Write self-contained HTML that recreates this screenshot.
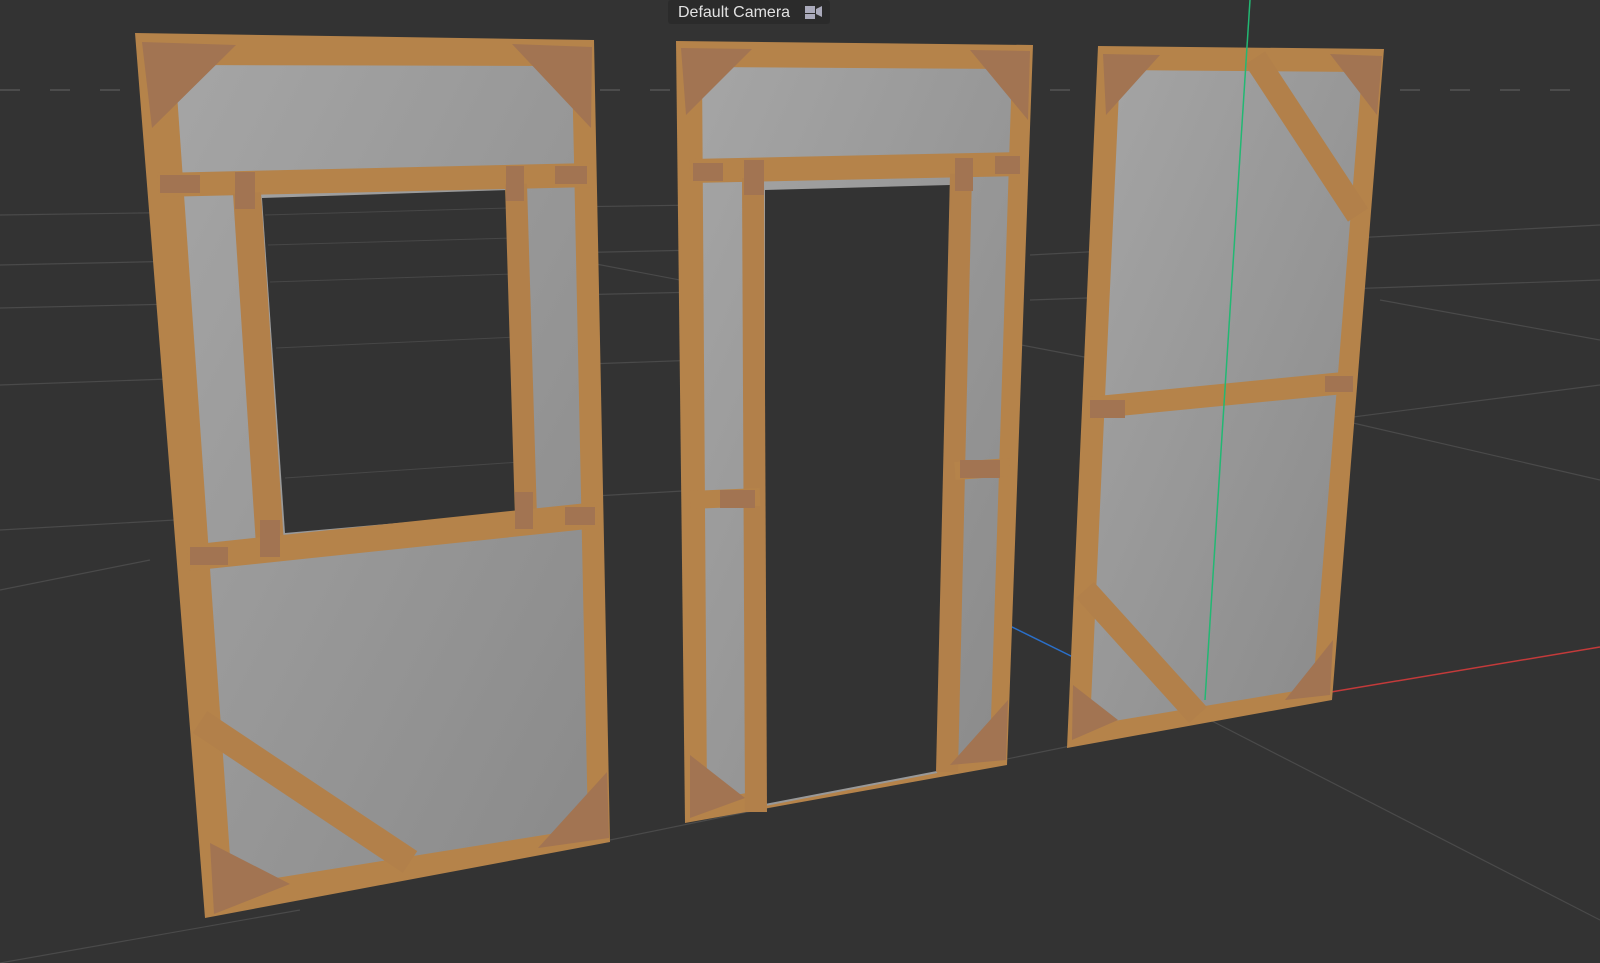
<!DOCTYPE html>
<html><head><style>
html,body{margin:0;padding:0;width:1600px;height:963px;overflow:hidden;background:#333;}
svg{display:block}
</style></head><body>
<svg width="1600" height="963" viewBox="0 0 1600 963" xmlns="http://www.w3.org/2000/svg">
<defs>
<linearGradient id="g" x1="0" y1="0" x2="1" y2="1"><stop offset="0" stop-color="#a5a5a5"/><stop offset="1" stop-color="#8a8a8a"/></linearGradient>
</defs>
<rect width="1600" height="963" fill="#333"/>
<g stroke="#4a4a4a" stroke-width="1.2" fill="none">
<line x1="0" y1="215" x2="700" y2="205"/>
<line x1="0" y1="265" x2="700" y2="250"/>
<line x1="0" y1="308" x2="700" y2="292"/>
<line x1="0" y1="385" x2="700" y2="360"/>
<line x1="0" y1="530" x2="700" y2="490"/>
<line x1="1030" y1="255" x2="1600" y2="225"/>
<line x1="1030" y1="300" x2="1600" y2="280"/>
<line x1="1330" y1="420" x2="1600" y2="385"/>
<line x1="0" y1="590" x2="150" y2="560"/>
<line x1="260" y1="200" x2="1100" y2="360"/>
<line x1="1380" y1="300" x2="1600" y2="340"/>
<line x1="1340" y1="420" x2="1600" y2="480"/>
<line x1="1210" y1="720" x2="1600" y2="920"/>
<line x1="0" y1="963" x2="300" y2="910"/>
<line x1="610" y1="840" x2="1100" y2="740"/>
</g>
<line x1="0" y1="90" x2="1600" y2="90" stroke="#555" stroke-width="1.5" stroke-dasharray="20 30"/>
<line x1="805" y1="525" x2="1075" y2="658" stroke="#2a6fc9" stroke-width="1.5"/>
<line x1="1325" y1="693" x2="1600" y2="647" stroke="#c43a3a" stroke-width="1.5"/>

<!-- FRAME 1 -->
<polygon points="135,33 594,40 610,842 205,918" fill="#b5834a"/>
<polygon points="175,65 572,66 588,828 232,885" fill="url(#g)"/>
<line x1="158" y1="185" x2="592" y2="175" stroke="#b5834a" stroke-width="24"/>
<polygon points="262,198 510,190 522,512 285,533" fill="#333"/>
<g stroke="#474747" stroke-width="1"><line x1="265" y1="215" x2="510" y2="208"/><line x1="268" y1="245" x2="512" y2="238"/><line x1="270" y1="282" x2="514" y2="274"/><line x1="276" y1="348" x2="517" y2="337"/><line x1="285" y1="478" x2="520" y2="462"/></g>
<line x1="247" y1="193" x2="270" y2="545" stroke="#b2804a" stroke-width="28"/>
<line x1="516" y1="184" x2="526" y2="518" stroke="#b2804a" stroke-width="22"/>
<line x1="188" y1="558" x2="597" y2="515" stroke="#b5834a" stroke-width="26"/>
<line x1="200" y1="722" x2="410" y2="862" stroke="#b2804a" stroke-width="26"/>
<g fill="#a27452">
<polygon points="142,42 236,45 152,128"/><polygon points="512,44 592,47 591,128"/>
<polygon points="210,843 290,884 214,914"/><polygon points="538,848 607,772 609,838"/>
<rect x="160" y="175" width="40" height="18"/><rect x="235" y="172" width="20" height="37"/><rect x="506" y="166" width="18" height="35"/><rect x="555" y="166" width="32" height="18"/>
<rect x="190" y="547" width="38" height="18"/><rect x="260" y="520" width="20" height="37"/><rect x="515" y="492" width="18" height="37"/><rect x="565" y="507" width="30" height="18"/>
</g>

<!-- FRAME 2 -->
<polygon points="676,41 1033,45 1007,765 685,823" fill="#b5834a"/>
<polygon points="702,67 1012,69 990,750 707,800" fill="url(#g)"/>
<line x1="690" y1="171" x2="1022" y2="164" stroke="#b5834a" stroke-width="24"/>
<polygon points="765,190 950,185 937,772 765,805" fill="#333"/>
<line x1="765" y1="805" x2="937" y2="772" stroke="#999" stroke-width="2"/>
<line x1="753" y1="178" x2="756" y2="812" stroke="#b2804a" stroke-width="22"/>
<line x1="961" y1="174" x2="947" y2="772" stroke="#b2804a" stroke-width="22"/>
<line x1="690" y1="500" x2="760" y2="497" stroke="#b5834a" stroke-width="18"/>
<line x1="955" y1="471" x2="1010" y2="467" stroke="#b5834a" stroke-width="18"/>
<g fill="#a27452">
<polygon points="681,48 752,49 686,115"/><polygon points="970,50 1030,51 1028,120"/>
<polygon points="690,755 745,798 690,818"/><polygon points="950,765 1008,700 1006,760"/>
<rect x="693" y="163" width="30" height="18"/><rect x="744" y="160" width="20" height="35"/><rect x="955" y="158" width="18" height="33"/><rect x="995" y="156" width="25" height="18"/>
<rect x="720" y="490" width="35" height="18"/><rect x="960" y="460" width="40" height="18"/>
</g>

<!-- FRAME 3 -->
<polygon points="1098,46 1384,49 1332,700 1067,748" fill="#b5834a"/>
<polygon points="1120,70 1362,72 1313,688 1090,725" fill="url(#g)"/>
<line x1="1088" y1="408" x2="1354" y2="382" stroke="#b5834a" stroke-width="22"/>
<line x1="1255" y1="58" x2="1358" y2="215" stroke="#b2804a" stroke-width="24"/>
<line x1="1085" y1="590" x2="1198" y2="715" stroke="#b2804a" stroke-width="24"/>
<line x1="1250" y1="0" x2="1205" y2="700" stroke="#22b873" stroke-width="1.5"/>
<g fill="#a27452">
<polygon points="1103,54 1160,55 1106,115"/><polygon points="1330,54 1382,56 1377,115"/>
<polygon points="1073,685 1118,720 1072,740"/><polygon points="1285,700 1333,640 1330,695"/>
<rect x="1090" y="400" width="35" height="18"/><rect x="1325" y="376" width="28" height="16"/>
</g>

<rect x="668" y="0" width="162" height="24" rx="3" fill="#2b2b2b"/>
<text x="678" y="17" font-family="Liberation Sans, sans-serif" font-size="16" fill="#e2e2e2">Default Camera</text>
<g fill="#aab">
<rect x="805" y="6" width="10" height="7"/><rect x="805" y="14" width="10" height="5"/><polygon points="816,9 822,6 822,17 816,14"/>
</g>
</svg>
</body></html>
